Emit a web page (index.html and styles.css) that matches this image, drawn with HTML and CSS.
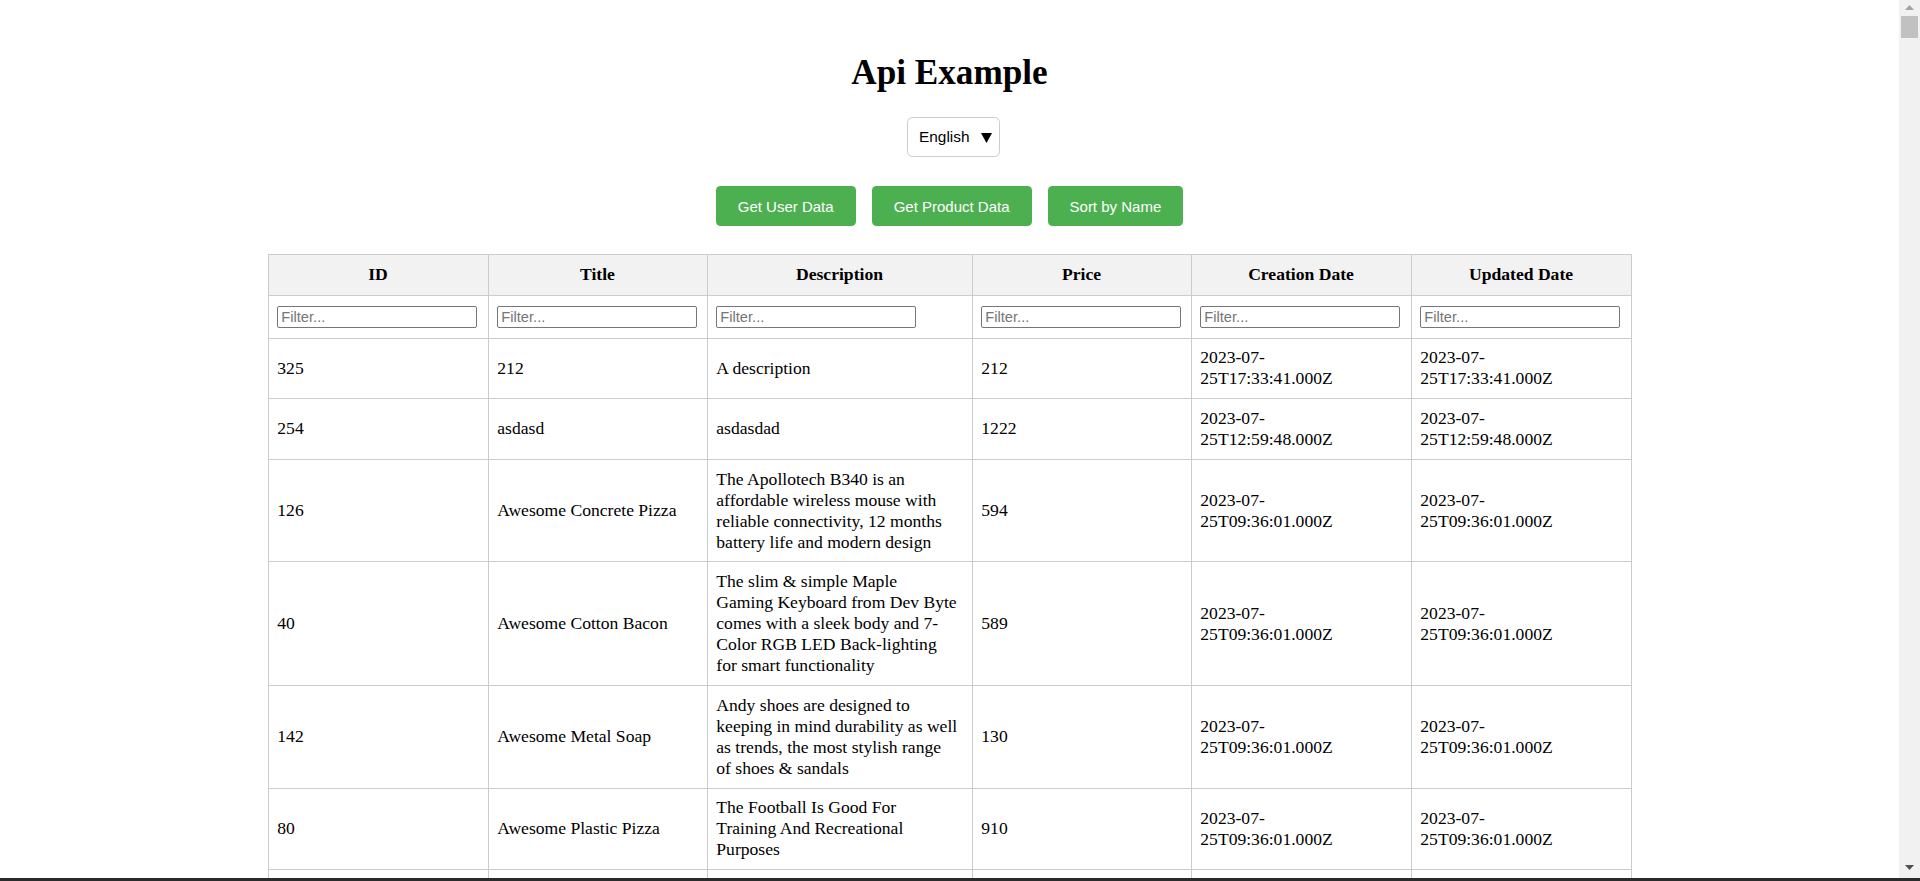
FILE: index.html
```html
<!DOCTYPE html>
<html lang="en">
<head>
<meta charset="utf-8">
<title>Api Example</title>
<link rel="stylesheet" href="styles.css">
</head>
<body>
<div class="window">
  <main class="page">
    <h1 class="title">Api Example</h1>
    <div class="lang-select">
      <span class="lang-label">English</span>
      <svg class="lang-arrow" width="11" height="10" viewBox="0 0 11 10"><polygon points="0,0 11,0 5.5,10" fill="#000"/></svg>
    </div>
    <div class="actions">
      <button class="btn">Get User Data</button>
      <button class="btn">Get Product Data</button>
      <button class="btn">Sort by Name</button>
    </div>
    <table class="data-table">
      <colgroup>
        <col class="col-id"><col class="col-title"><col class="col-desc"><col class="col-price"><col class="col-created"><col class="col-updated">
      </colgroup>
      <thead>
        <tr class="head-row">
          <th>ID</th><th>Title</th><th>Description</th><th>Price</th><th>Creation Date</th><th>Updated Date</th>
        </tr>
        <tr class="filter-row">
          <td><input class="filter" type="text" placeholder="Filter..."></td>
          <td><input class="filter" type="text" placeholder="Filter..."></td>
          <td><input class="filter" type="text" placeholder="Filter..."></td>
          <td><input class="filter" type="text" placeholder="Filter..."></td>
          <td><input class="filter" type="text" placeholder="Filter..."></td>
          <td><input class="filter" type="text" placeholder="Filter..."></td>
        </tr>
      </thead>
      <tbody>
        <tr>
          <td>325</td><td>212</td><td class="desc">A description</td><td>212</td>
          <td class="date">2023-07-25T17:33:41.000Z</td><td class="date">2023-07-25T17:33:41.000Z</td>
        </tr>
        <tr>
          <td>254</td><td>asdasd</td><td class="desc">asdasdad</td><td>1222</td>
          <td class="date">2023-07-25T12:59:48.000Z</td><td class="date">2023-07-25T12:59:48.000Z</td>
        </tr>
        <tr>
          <td>126</td><td>Awesome Concrete Pizza</td><td class="desc">The Apollotech B340 is an affordable wireless mouse with reliable connectivity, 12 months battery life and modern design</td><td>594</td>
          <td class="date">2023-07-25T09:36:01.000Z</td><td class="date">2023-07-25T09:36:01.000Z</td>
        </tr>
        <tr>
          <td>40</td><td>Awesome Cotton Bacon</td><td class="desc">The slim &amp; simple Maple Gaming Keyboard from Dev Byte comes with a sleek body and 7-Color RGB LED Back-lighting for smart functionality</td><td>589</td>
          <td class="date">2023-07-25T09:36:01.000Z</td><td class="date">2023-07-25T09:36:01.000Z</td>
        </tr>
        <tr>
          <td>142</td><td>Awesome Metal Soap</td><td class="desc">Andy shoes are designed to keeping in mind durability as well as trends, the most stylish range of shoes &amp; sandals</td><td>130</td>
          <td class="date">2023-07-25T09:36:01.000Z</td><td class="date">2023-07-25T09:36:01.000Z</td>
        </tr>
        <tr>
          <td>80</td><td>Awesome Plastic Pizza</td><td class="desc">The Football Is Good For Training And Recreational Purposes</td><td>910</td>
          <td class="date">2023-07-25T09:36:01.000Z</td><td class="date">2023-07-25T09:36:01.000Z</td>
        </tr>
        <tr>
          <td>57</td><td>Awesome Rubber Chair</td><td class="desc">The beautiful range of Apple Naturalé that has an exciting mix of natural ingredients</td><td>412</td>
          <td class="date">2023-07-25T09:36:01.000Z</td><td class="date">2023-07-25T09:36:01.000Z</td>
        </tr>
      </tbody>
    </table>
  </main>
  <div class="scrollbar">
    <div class="sb-btn"><svg width="9" height="5" viewBox="0 0 9 5"><polygon points="0,5 9,5 4.5,0" fill="#a3a3a3"/></svg></div>
    <div class="sb-thumb"></div>
    <div class="sb-track"></div>
    <div class="sb-btn sb-btn-down"><svg width="9" height="5" viewBox="0 0 9 5"><polygon points="0,0 9,0 4.5,5" fill="#505050"/></svg></div>
  </div>
</div>
<div class="frame-edge"></div>
</body>
</html>
```

FILE: styles.css
```css
html, body {
  margin: 0;
  padding: 0;
  height: 100%;
}

body {
  display: flex;
  flex-direction: column;
  overflow: hidden;
  background: #ffffff;
  font-family: "Liberation Serif", "Times New Roman", serif;
  font-size: 17.6px;
  color: #000;
}

.window {
  flex: 1;
  display: flex;
  min-height: 0;
}

.page {
  flex: 1;
  min-width: 0;
  overflow: hidden;
  display: flex;
  flex-direction: column;
  align-items: center;
  padding: 53px 8.8px 0;
}

.page > * {
  flex-shrink: 0;
}

.title {
  margin: 0 0 24px;
  font-size: 35.2px;
  font-weight: bold;
  line-height: normal;
}

.lang-select {
  box-sizing: border-box;
  width: 93px;
  height: 40px;
  margin-left: 8px;
  display: flex;
  align-items: center;
  justify-content: space-between;
  padding: 0 7px 0 11px;
  border: 1px solid #cccccc;
  border-radius: 5.5px;
  background: #fff;
  font-family: "Liberation Sans", Arial, sans-serif;
  font-size: 15.4px;
}

.lang-arrow {
  display: block;
  margin-top: 1px;
}

.actions {
  display: flex;
  gap: 16px;
  margin-top: 29px;
}

.btn {
  height: 40px;
  padding: 0 22px;
  border: none;
  border-radius: 4.4px;
  background: #4caf50;
  color: #fff;
  font-family: "Liberation Sans", Arial, sans-serif;
  font-size: 15px;
  cursor: pointer;
}

.data-table {
  margin-top: 28px;
  width: 1363px;
  table-layout: fixed;
  border-collapse: collapse;
}

.col-id { width: 220px; }
.col-title { width: 219px; }
.col-desc { width: 265px; }
.col-price { width: 219px; }
.col-created { width: 220px; }
.col-updated { width: 220px; }

.data-table th,
.data-table td {
  border: 1px solid #cccccc;
  padding: 8.8px;
  text-align: left;
  vertical-align: middle;
  line-height: 21px;
}

.data-table th {
  background: #f2f2f2;
  text-align: center;
  font-weight: bold;
  padding-top: 9.3px;
  padding-bottom: 9.3px;
}

.data-table td.desc {
  padding-right: 13.7px;
}

.data-table td.date {
  padding-right: 20px;
}

.data-table .filter-row td {
  padding-top: 10px;
  padding-bottom: 10px;
}

.filter {
  box-sizing: border-box;
  display: block;
  width: 200px;
  height: 22px;
  margin: 0;
  padding: 1px 3px;
  border: 1px solid #767676;
  border-radius: 2px;
  font-family: "Liberation Sans", Arial, sans-serif;
  font-size: 14.67px;
  color: #000;
  background: #fff;
}

.filter::placeholder {
  color: #757575;
}

.scrollbar {
  width: 21px;
  flex-shrink: 0;
  background: #f1f1f1;
  display: flex;
  flex-direction: column;
  align-items: center;
}

.sb-btn {
  height: 14px;
  width: 100%;
  display: flex;
  align-items: center;
  justify-content: center;
}

.sb-btn-down {
  height: 22px;
}

.sb-thumb {
  width: 17px;
  height: 22px;
  margin-top: 2px;
  background: #c1c1c1;
}

.sb-track {
  flex: 1;
}

.frame-edge {
  height: 3px;
  background: #2b2b2b;
  flex-shrink: 0;
}
```
